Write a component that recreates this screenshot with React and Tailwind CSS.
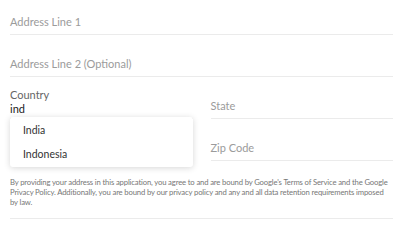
export default function App() {
  const font = { fontFamily: "Lato, 'Liberation Sans', sans-serif" };

  return (
    <div className="w-[410px] h-[245px] bg-white overflow-hidden pl-[10px] pr-[17px]" style={font}>
      {/* Address lines */}
      <div className="pt-[15px] pb-[5px] border-b border-[#ebebeb] text-[11px] leading-[14px] text-[#9b9b9b]">
        Address Line 1
      </div>
      <div className="pt-[22px] pb-[5px] border-b border-[#ebebeb] text-[11px] leading-[14px] text-[#9b9b9b]">
        Address Line 2 (Optional)
      </div>

      {/* Country / State / City / Zip */}
      <div className="grid grid-cols-2 gap-x-[18px]">
        <div className="relative pt-[11px] pb-[2px] border-b border-[#ebebeb]">
          <div className="text-[11px] leading-[14px] text-[#666]">Country</div>
          <div className="text-[11px] leading-[14px] text-[#222]">ind</div>
          <div className="absolute left-0 right-0 top-[calc(100%-1px)] z-10 bg-white rounded-[3px] pt-[2px] shadow-[0_1px_6px_rgba(0,0,0,0.16)] text-[10.5px] text-[#333]">
            <div className="h-[24px] flex items-center px-[13px]">India</div>
            <div className="h-[24px] flex items-center px-[13px]">Indonesia</div>
          </div>
        </div>
        <div className="pt-[22px] pb-[5px] border-b border-[#ebebeb] text-[11px] leading-[14px] text-[#9b9b9b]">
          State
        </div>
        <div className="h-[41px] border-b border-[#ebebeb]"></div>
        <div className="pt-[22px] pb-[5px] border-b border-[#ebebeb] text-[11px] leading-[14px] text-[#9b9b9b]">
          Zip Code
        </div>
      </div>

      {/* Disclaimer */}
      <div className="pt-[16px] pb-[11px] border-b border-[#ebebeb] text-[7.7px] leading-[10px] tracking-[-0.15px] text-[#777]">
        By providing your address in this application, you agree to and are bound by Google's Terms of Service and the Google Privacy Policy. Additionally, you are bound by our privacy policy and any and all data retention requirements imposed by law.
      </div>
    </div>
  );
}
